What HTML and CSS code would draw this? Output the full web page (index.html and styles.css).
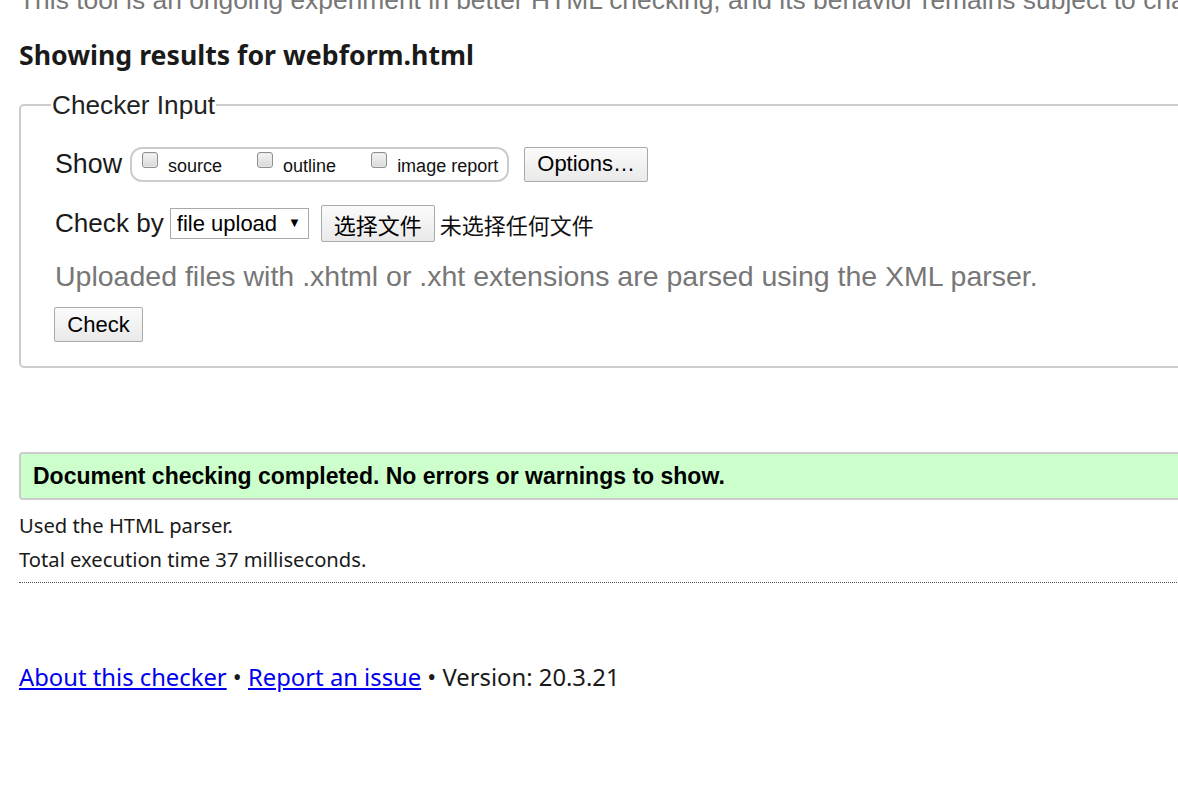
FILE: index.html
```html
<!DOCTYPE html>
<html lang="en">
<head>
<meta charset="utf-8">
<title>Showing results for webform.html - Nu Html Checker</title>
<link rel="stylesheet" href="styles.css">
</head>
<body>
<div class="page">
  <p class="intro">This tool is an ongoing experiment in better HTML checking, and its behavior remains subject to change</p>
  <h2 class="results-title">Showing results for webform.html</h2>

  <form class="checker">
    <fieldset class="input-set">
      <legend class="input-legend">Checker Input</legend>

      <div class="row row-show">
        <span class="row-label">Show</span>
        <span class="toggles">
          <label class="toggle"><input type="checkbox" class="cb"><span>source</span></label>
          <label class="toggle"><input type="checkbox" class="cb"><span>outline</span></label>
          <label class="toggle"><input type="checkbox" class="cb"><span>image report</span></label>
        </span>
        <button type="button" class="btn btn-options">Options…</button>
      </div>

      <div class="row row-by">
        <span class="row-label row-label-by">Check by</span>
        <span class="select-wrap">
          <select class="select"><option>file upload</option></select>
          <span class="select-arrow">▼</span>
        </span>
        <span class="file">
          <button type="button" class="btn btn-file">选择文件</button>
          <span class="file-none">未选择任何文件</span>
        </span>
      </div>

      <p class="hint">Uploaded files with .xhtml or .xht extensions are parsed using the XML parser.</p>

      <div class="row row-submit">
        <button type="button" class="btn btn-check">Check</button>
      </div>
    </fieldset>
  </form>

  <div class="success">
    <p class="success-text">Document checking completed. No errors or warnings to show.</p>
  </div>

  <p class="meta meta-first">Used the HTML parser.</p>
  <p class="meta">Total execution time 37 milliseconds.</p>

  <hr class="sep">

  <p class="footer"><a href="#">About this checker</a> • <a href="#">Report an issue</a> • Version: 20.3.21</p>
</div>
</body>
</html>
```
FILE: styles.css
```css
html, body {
  margin: 0;
  padding: 0;
  background: #ffffff;
  overflow: hidden;
}

body {
  font-family: "Noto Sans", "Open Sans", sans-serif;
  color: #1a1a1a;
}

.page {
  width: 1400px;
  padding-left: 19px;
}

.intro {
  margin: -16px 0 0 0;
  font-family: "Liberation Sans", Arial, sans-serif;
  font-size: 26.4px;
  line-height: 32px;
  color: #777777;
  white-space: nowrap;
}

.results-title {
  margin: 22px 0 0 0;
  font-size: 26.7px;
  line-height: 34px;
  font-weight: 700;
  color: #1a1a1a;
}

.checker {
  margin: 19px 0 0 0;
}

.input-set {
  margin: 0;
  border: 2px solid #cccccc;
  border-radius: 5px;
  padding: 27px 34px 24px 34px;
  font-family: "Liberation Sans", Arial, sans-serif;
}

.input-legend {
  font-size: 26.2px;
  line-height: 28px;
  padding: 0 1px;
  margin-left: -4px;
  color: #222222;
}

.row {
  display: flex;
  align-items: center;
}

.row-label {
  font-size: 26.8px;
  color: #1a1a1a;
}

.row-label-by {
  font-size: 26.1px;
}

.row-show {
  height: 36px;
}

.toggles {
  display: flex;
  align-items: center;
  margin-left: 8px;
  height: 31px;
  border: 2px solid #cccccc;
  border-radius: 12px;
  padding: 0 9px 0 10px;
  gap: 35px;
}

.toggle {
  display: flex;
  align-items: flex-start;
  font-size: 18px;
  color: #111111;
}

.toggle span {
  margin-top: 4px;
  line-height: 20px;
}

.cb {
  appearance: none;
  -webkit-appearance: none;
  width: 16px;
  height: 16px;
  margin: 0 10px 0 0;
  border: 1px solid #8f8f8f;
  border-radius: 3px;
  background: linear-gradient(#f4f4f4, #d8d8d8);
  box-shadow: inset 0 0 0 1px #e8e8e8;
}

.btn {
  font-family: "Liberation Sans", Arial, sans-serif;
  font-size: 22px;
  color: #000000;
  border: 1px solid #a9a9a9;
  border-radius: 2px;
  background: linear-gradient(#fbfbfb, #e9e9e9);
  padding: 0 12px;
  height: 35px;
}

.btn-options {
  margin-left: 15px;
  width: 124px;
}

.row-by {
  margin-top: 23px;
  height: 37px;
}

.select-wrap {
  position: relative;
  display: inline-block;
  margin-left: 6px;
}

.select {
  appearance: none;
  -webkit-appearance: none;
  font-family: "Liberation Sans", Arial, sans-serif;
  font-size: 22px;
  color: #000000;
  width: 139px;
  height: 31px;
  padding: 0 0 0 6px;
  border: 1px solid #a9a9a9;
  border-radius: 0;
  background: #ffffff;
}

.select-arrow {
  position: absolute;
  right: 8px;
  top: 8px;
  font-size: 13px;
  line-height: 14px;
  color: #000000;
  pointer-events: none;
}

.file {
  display: flex;
  align-items: center;
  margin-left: 12px;
}

.btn-file {
  font-family: "Noto Sans CJK SC", sans-serif;
  height: 37px;
  width: 114px;
  padding: 0;
  font-size: 22px;
}

.file-none {
  margin-left: 5px;
  font-family: "Noto Sans CJK SC", sans-serif;
  font-size: 22px;
  color: #111111;
}

.hint {
  margin: 14px 0 0 0;
  font-size: 28.5px;
  line-height: 40px;
  color: #777777;
  white-space: nowrap;
}

.row-submit {
  margin-top: 11px;
  margin-left: -1px;
}

.btn-check {
  width: 89px;
  padding: 0;
}

.success {
  margin-top: 84px;
  border: 2px solid #cccccc;
  border-radius: 4px;
  background: #ccffcc;
  height: 44px;
  display: flex;
  align-items: center;
  padding-left: 12px;
}

.success-text {
  margin: 0;
  font-family: "Liberation Sans", Arial, sans-serif;
  font-weight: 700;
  font-size: 23px;
  color: #000000;
}

.meta {
  margin: 0;
  font-size: 20.2px;
  line-height: 34px;
  color: #1a1a1a;
}

.meta-first {
  margin-top: 8px;
}

.sep {
  margin: 6px 0 0 0;
  border: 0;
  border-top: 1px dotted #555555;
  height: 0;
}

.footer {
  margin: 78px 0 0 0;
  font-size: 23.8px;
  line-height: 32px;
  color: #1a1a1a;
}

.footer a {
  color: #0000ee;
}
```
